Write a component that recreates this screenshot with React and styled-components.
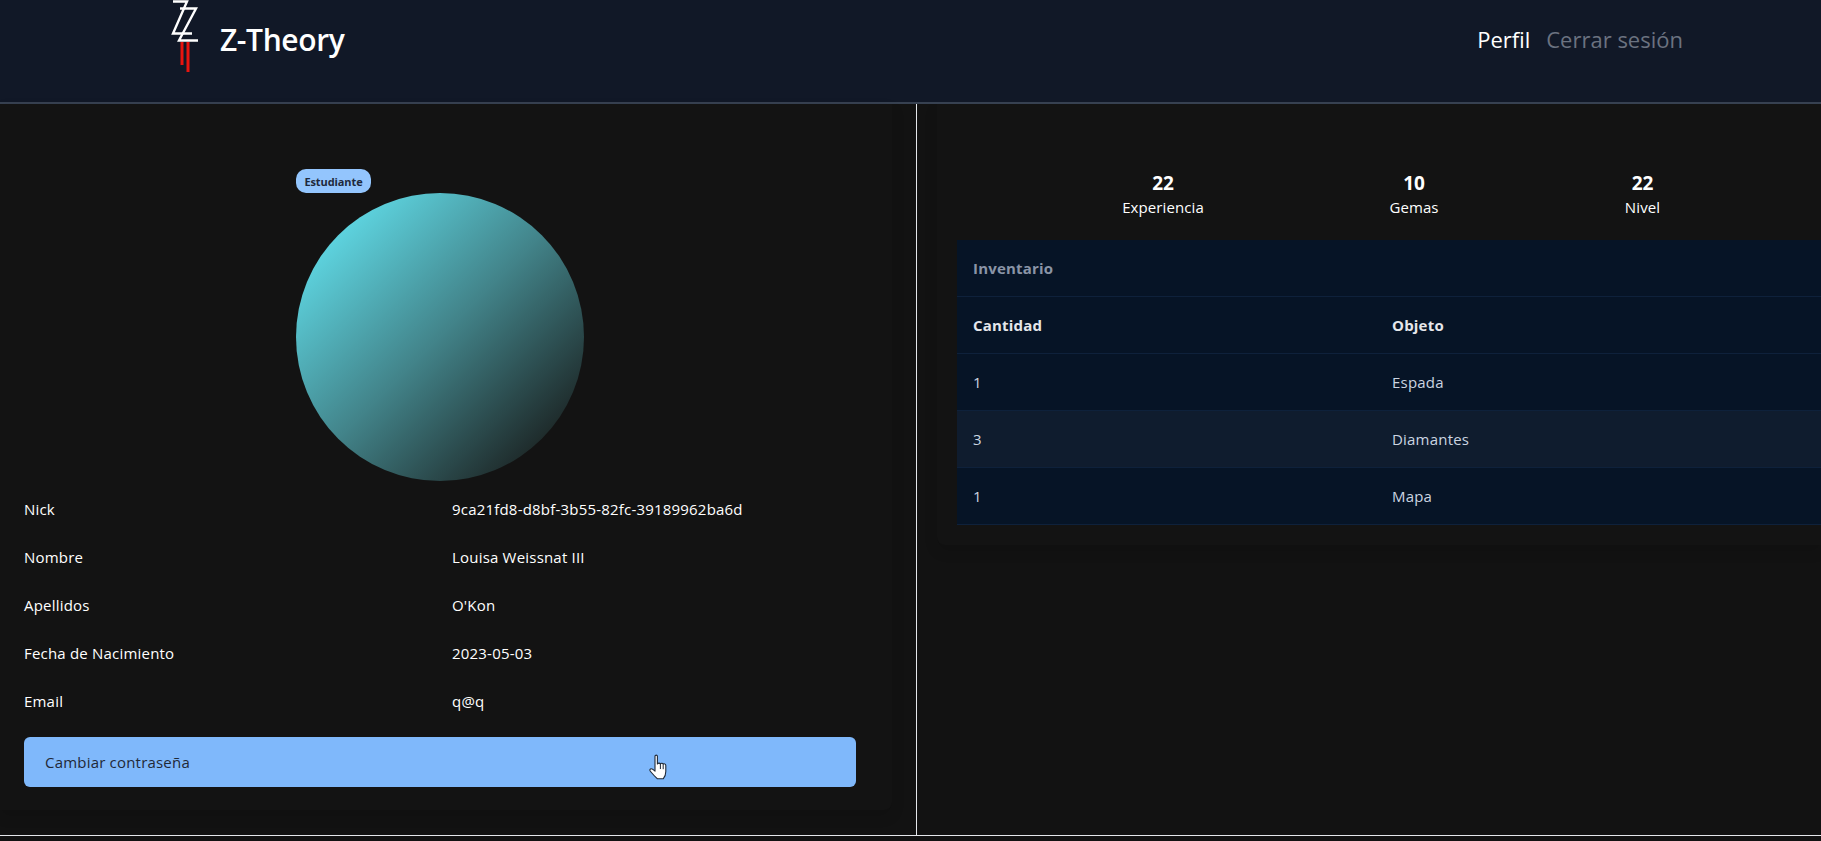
import styled, { createGlobalStyle } from "styled-components";

const GlobalStyle = createGlobalStyle`
  html, body {
    margin: 0;
    padding: 0;
    height: 100%;
    background: #121212;
    overflow: hidden;
    font-family: "Open Sans", "Noto Sans", sans-serif;
  }
`;

const Page = styled.div`
  width: 100%;
  height: 841px;
  display: flex;
  flex-direction: column;
  overflow: hidden;
`;

const Header = styled.header`
  height: 104px;
  box-sizing: border-box;
  flex-shrink: 0;
  display: flex;
  padding: 0 138px 0 171px;
  background: #111827;
  border-bottom: 2px solid #374151;
`;

const Brand = styled.div`
  height: 78px;
  display: flex;
  align-items: center;
  color: #fff;
`;

const Logo = styled.svg`
  width: 28px;
  height: 74px;
  align-self: flex-start;
`;

const BrandName = styled.span`
  margin-left: 21px;
  font-size: 30px;
  font-weight: 600;
  letter-spacing: -0.4px;
`;

const Nav = styled.nav`
  height: 78px;
  margin-left: auto;
  display: flex;
  align-items: center;
  gap: 16px;
`;

const NavLink = styled.a`
  font-size: 22px;
  color: ${(p) => (p.$active ? "#fff" : "#6b7280")};
`;

const Main = styled.main`
  height: 731px;
  flex-shrink: 0;
  display: grid;
  grid-template-columns: 917px 1fr;
  border-bottom: 1px solid #e5e7eb;
`;

const ProfilePanel = styled.section`
  box-sizing: border-box;
  padding-right: 24px;
  border-right: 1px solid #e5e7eb;
`;

const ProfileCard = styled.div`
  box-sizing: border-box;
  height: 706px;
  padding: 65px 0 0 24px;
  background: #131313;
  border-radius: 0 0 8px 0;
  box-shadow: 0 6px 14px rgba(0, 0, 0, 0.12);
`;

const AvatarBlock = styled.div`
  position: relative;
  width: 288px;
  height: 288px;
  margin: 24px 0 4px 272px;
`;

const Avatar = styled.div`
  width: 100%;
  height: 100%;
  border-radius: 50%;
  background: linear-gradient(135deg, #5fd8e4 12%, #428389 50%, #1e2a2a 86%);
`;

const RoleBadge = styled.span`
  position: absolute;
  top: -24px;
  left: 0;
  height: 24px;
  width: 75px;
  display: flex;
  align-items: center;
  justify-content: center;
  border-radius: 10px;
  background: #93c5fd;
  color: #1e293b;
  font-size: 11px;
  font-weight: 700;
  letter-spacing: -0.1px;
`;

const InfoRow = styled.div`
  height: 48px;
  width: 832px;
  display: grid;
  grid-template-columns: 428px 1fr;
  align-items: center;
  color: #fff;
  font-size: 15px;
  letter-spacing: 0.2px;
`;

const PasswordButton = styled.button`
  position: relative;
  display: block;
  width: 832px;
  height: 50px;
  margin-top: 12px;
  padding: 0 21px;
  border: none;
  border-radius: 6px;
  background: #7fb8fb;
  color: #1f2937;
  font-family: inherit;
  font-size: 15px;
  letter-spacing: 0.2px;
  text-align: left;
`;

const Cursor = styled.svg`
  position: absolute;
  left: 625px;
  top: 17px;
  width: 20px;
  height: 26px;
`;

const StatsPanel = styled.section`
  padding-left: 20px;
  overflow: hidden;
`;

const StatsCard = styled.div`
  box-sizing: border-box;
  height: 441px;
  padding: 65px 0 0 20px;
  background: #131313;
  border-radius: 0 0 0 8px;
  box-shadow: 0 6px 14px rgba(0, 0, 0, 0.12);
`;

const Stats = styled.div`
  display: flex;
  gap: 187px;
  padding-left: 166px;
  height: 71px;
`;

const Stat = styled.div`
  width: ${(p) => p.$width}px;
  display: flex;
  flex-direction: column;
  align-items: center;
  color: #fff;
  white-space: nowrap;
`;

const StatValue = styled.span`
  margin-top: 1px;
  font-size: 19px;
  line-height: 27px;
  font-weight: 700;
`;

const StatLabel = styled.span`
  font-size: 15px;
  line-height: 20px;
  letter-spacing: 0.1px;
`;

const Table = styled.table`
  width: 864px;
  table-layout: fixed;
  border-collapse: collapse;
  background: #061426;
  font-size: 15px;
  letter-spacing: 0.2px;
`;

const Caption = styled.td`
  height: 56px;
  padding: 0 16px;
  color: #8a94a6;
  font-weight: 700;
`;

const Row = styled.tr`
  border-top: 1px solid #0e213b;
  background: ${(p) => (p.$alt ? "#0f1c2e" : "transparent")};
  &:last-child {
    border-bottom: 1px solid #0e213b;
  }
`;

const HeadCell = styled.th`
  height: 56px;
  padding: 0 16px;
  text-align: left;
  font-weight: 700;
  color: #e5e7eb;
`;

const Cell = styled.td`
  height: 56px;
  padding: 0 16px;
  color: #cbd5e1;
`;

const profile = [
  ["Nick", "9ca21fd8-d8bf-3b55-82fc-39189962ba6d"],
  ["Nombre", "Louisa Weissnat III"],
  ["Apellidos", "O'Kon"],
  ["Fecha de Nacimiento", "2023-05-03"],
  ["Email", "q@q"],
];

const stats = [
  { value: 22, label: "Experiencia", width: 80 },
  { value: 10, label: "Gemas", width: 48 },
  { value: 22, label: "Nivel", width: 35 },
];

const items = [
  [1, "Espada"],
  [3, "Diamantes"],
  [1, "Mapa"],
];

const App = () => {
  return (
    <Page>
      <GlobalStyle />
      <Header>
        <Brand>
          <Logo viewBox="170 0 28 74">
            <g fill="none" stroke="#fff" strokeWidth="2.4">
              <path d="M172 1.5H186L172 33.5H191" />
              <path d="M179 8.5H195L178 40.5H197" />
            </g>
            <g fill="none" stroke="#e8140f" strokeWidth="3">
              <path d="M181 42V65" />
              <path d="M187 42V72" />
            </g>
          </Logo>
          <BrandName>Z-Theory</BrandName>
        </Brand>
        <Nav>
          <NavLink $active>Perfil</NavLink>
          <NavLink>Cerrar sesión</NavLink>
        </Nav>
      </Header>
      <Main>
        <ProfilePanel>
          <ProfileCard>
            <AvatarBlock>
              <RoleBadge>Estudiante</RoleBadge>
              <Avatar />
            </AvatarBlock>
            {profile.map(([label, value]) => (
              <InfoRow key={label}>
                <span>{label}</span>
                <span>{value}</span>
              </InfoRow>
            ))}
            <PasswordButton>
              Cambiar contraseña
              <Cursor viewBox="0 0 20 26">
                <path
                  d="M6 2.2C6 .8 8.4 .8 8.4 2.2V10c.6-1.2 2.6-1.2 3 0 .6-1 2.4-1 2.8.2.8-.8 2.6-.4 2.6 1.2v6c0 3-1.4 6-2.6 7.4H8.4C6.6 23 3 19.6 1.2 17c-1-1.6.8-3 2.4-1.8L6 17.2Z"
                  fill="#fff"
                  stroke="#1f2937"
                  strokeWidth="1.1"
                  strokeLinejoin="round"
                />
                <path d="M11.4 10v5M14.2 10.2v5" stroke="#1f2937" strokeWidth="1" />
              </Cursor>
            </PasswordButton>
          </ProfileCard>
        </ProfilePanel>
        <StatsPanel>
          <StatsCard>
            <Stats>
              {stats.map((s) => (
                <Stat key={s.label} $width={s.width}>
                  <StatValue>{s.value}</StatValue>
                  <StatLabel>{s.label}</StatLabel>
                </Stat>
              ))}
            </Stats>
            <Table>
              <colgroup>
                <col width="419" />
                <col />
              </colgroup>
              <tbody>
                <tr>
                  <Caption colSpan="2">Inventario</Caption>
                </tr>
                <Row>
                  <HeadCell>Cantidad</HeadCell>
                  <HeadCell>Objeto</HeadCell>
                </Row>
                {items.map(([qty, name], i) => (
                  <Row key={name} $alt={i === 1}>
                    <Cell>{qty}</Cell>
                    <Cell>{name}</Cell>
                  </Row>
                ))}
              </tbody>
            </Table>
          </StatsCard>
        </StatsPanel>
      </Main>
    </Page>
  );
};

export default App;
